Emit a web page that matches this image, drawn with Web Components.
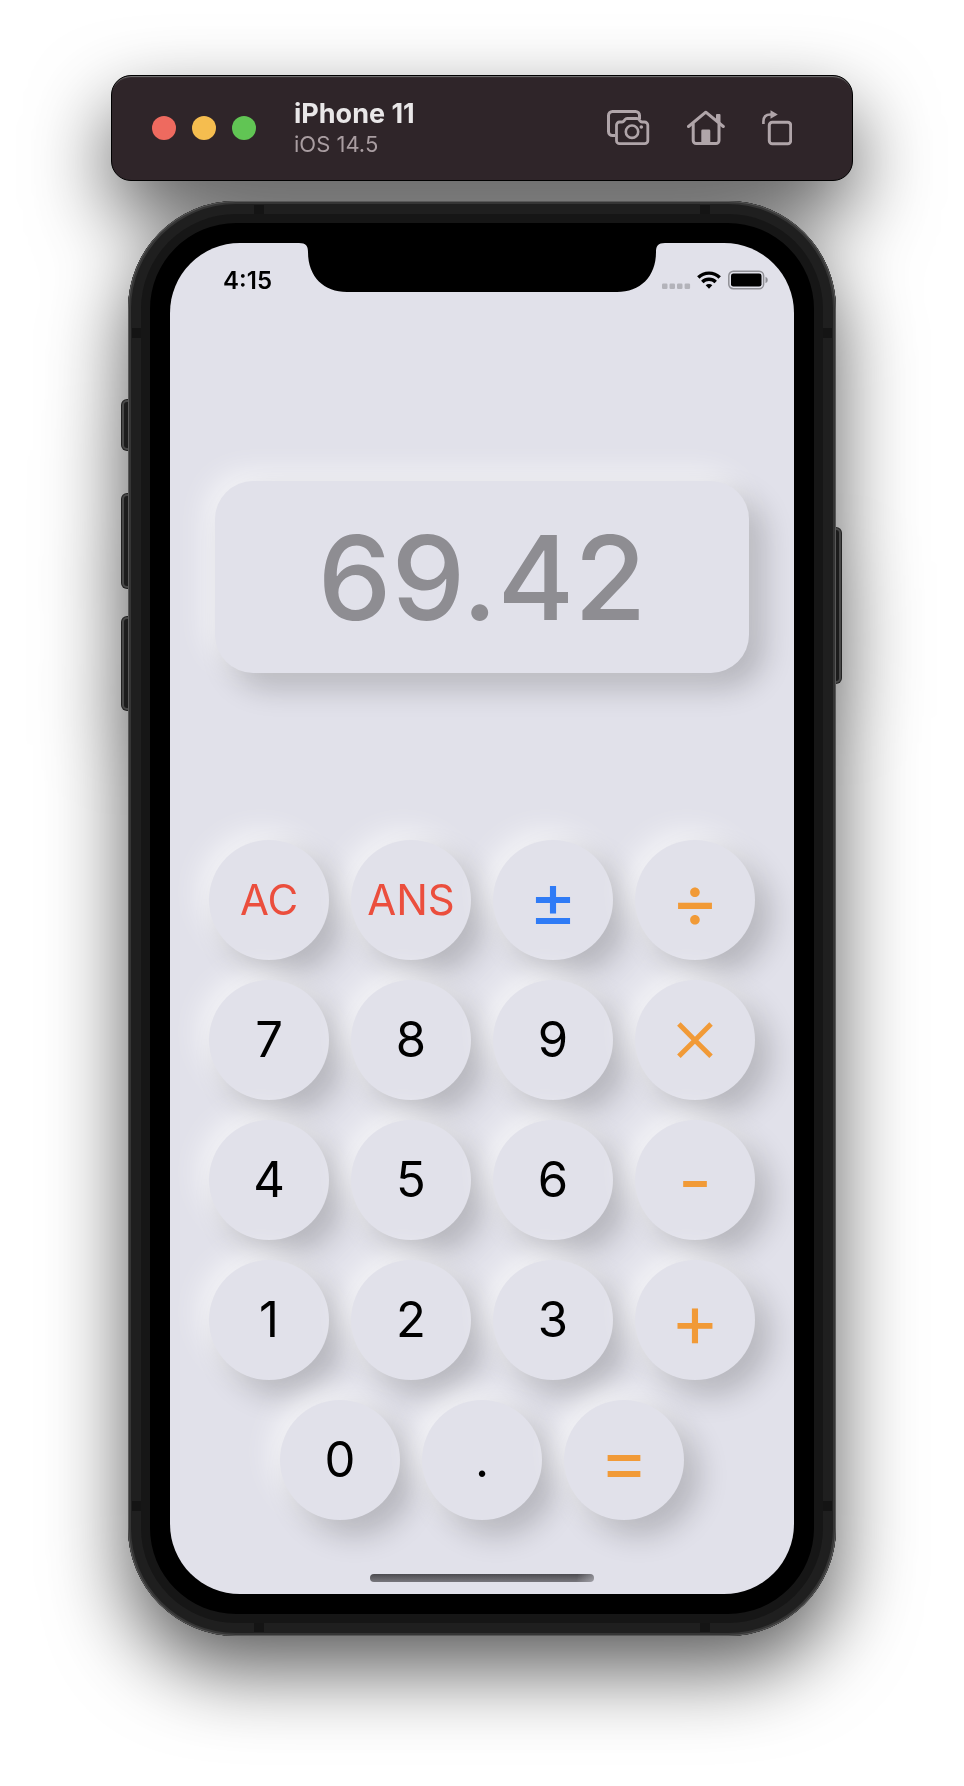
<!DOCTYPE html>
<html lang="en">
<head>
<meta charset="utf-8">
<meta name="viewport" content="width=device-width, initial-scale=1">
<title>iPhone 11 – Calculator</title>
<style>
  body { margin: 0; background: #fff; font-family: Inter, "Liberation Sans", sans-serif; }
</style>
</head>
<body>
<simulator-stage>
  <simulator-toolbar name="iPhone 11" os="iOS 14.5"></simulator-toolbar>
  <phone-frame>
    <status-bar time="4:15"></status-bar>
    <calc-display>69.42</calc-display>
    <calc-pad>
      <calc-row>
        <calc-key kind="clear">AC</calc-key>
        <calc-key kind="clear">ANS</calc-key>
        <calc-key kind="sign" label="plus minus">±</calc-key>
        <calc-key kind="operator" label="divide">÷</calc-key>
      </calc-row>
      <calc-row>
        <calc-key>7</calc-key>
        <calc-key>8</calc-key>
        <calc-key>9</calc-key>
        <calc-key kind="times" label="multiply">×</calc-key>
      </calc-row>
      <calc-row>
        <calc-key>4</calc-key>
        <calc-key>5</calc-key>
        <calc-key>6</calc-key>
        <calc-key kind="operator" label="subtract">-</calc-key>
      </calc-row>
      <calc-row>
        <calc-key>1</calc-key>
        <calc-key>2</calc-key>
        <calc-key>3</calc-key>
        <calc-key kind="operator" label="add">+</calc-key>
      </calc-row>
      <calc-row>
        <calc-key>0</calc-key>
        <calc-key>.</calc-key>
        <calc-key kind="operator" label="equals">=</calc-key>
      </calc-row>
    </calc-pad>
  </phone-frame>
</simulator-stage>

<script>
class Base extends HTMLElement {
  constructor() {
    super();
    this.attachShadow({ mode: "open" }).innerHTML = this.render();
  }
  render() { return "<slot></slot>"; }
}

customElements.define("simulator-stage", class extends Base {
  render() {
    return `<style>
      :host { display: block; overflow: hidden; }
      main { display: flex; flex-direction: column; align-items: center; gap: 20px;
             padding: 75px 16px 149px; filter: drop-shadow(0 34px 40px rgba(0,0,0,.64)); }
    </style><main><slot></slot></main>`;
  }
});

customElements.define("simulator-toolbar", class extends Base {
  render() {
    return `<style>
      :host { display: block; width: 100%; max-width: 742px; }
      header { display: flex; align-items: center; box-sizing: border-box; height: 106px;
               padding: 0 60px 0 40px; border: 1px solid #000; border-radius: 20px;
               background: #2f2529; box-shadow: inset 0 2px 1px -1px #777; }
      .lights { display: flex; gap: 16px; }
      .lights button { width: 24px; height: 24px; padding: 0; border: 0; border-radius: 50%; }
      .close { background: #ee6a5f; } .min { background: #f5bd4f; } .max { background: #61c554; }
      .title { flex: 1; margin-left: 38px; }
      h1 { margin: 0; font-size: 27px; line-height: 32px; font-weight: 700; color: #e9e7e8; }
      p { margin: 0; font-size: 22px; line-height: 28px; color: #a99da1; }
      nav { display: flex; gap: 37px; align-items: center; }
      nav button { display: block; padding: 0; border: 0; background: none; color: #b0a5a9; }
      svg { display: block; fill: none; stroke: currentColor; stroke-width: 3;
            stroke-linejoin: round; stroke-linecap: round; }
      .solid { fill: currentColor; stroke: none; }
    </style>
    <header>
      <div class="lights">
        <button class="close" aria-label="Close"></button>
        <button class="min" aria-label="Minimize"></button>
        <button class="max" aria-label="Zoom"></button>
      </div>
      <div class="title"><h1>${this.getAttribute("name")}</h1><p>${this.getAttribute("os")}</p></div>
      <nav>
        <button aria-label="Screenshot"><svg width="43" height="36" viewBox="0 0 43 36">
          <path d="M8 25.500H5.500a4 4 0 0 1-4-4V5.500a4 4 0 0 1 4-4H28.500a4 4 0 0 1 4 4V9" stroke-linecap="butt"/>
          <path d="M12.500 12H15c1 0 1.500-.4 2.200-1.400l.8-1.100c.6-.8 1.300-1 2.200-1h9.600c.9 0 1.600.2 2.200 1l.8 1.100c.7 1 1.200 1.400 2.200 1.400h2.500a3.300 3.300 0 0 1 3.300 3.300v15.400a3 3 0 0 1-3 3H12.500a3 3 0 0 1-3-3V15a3 3 0 0 1 3-3z" stroke-width="2.800"/>
          <circle cx="25" cy="21.700" r="6.200" stroke-width="2.600"/><circle class="solid" cx="34.300" cy="17" r="1.800"/>
        </svg></button>
        <button aria-label="Home"><svg width="38" height="36" viewBox="0 0 38 36">
          <path d="M1.500 16.500 L18.800 2.200 L36.300 16.500"/>
          <path d="M6.200 14V30.500a3 3 0 0 0 3 3H29a3 3 0 0 0 3-3V14"/>
          <path class="solid" d="M14.300 20.800a1.300 1.300 0 0 1 1.300-1.300h6.400a1.300 1.300 0 0 1 1.300 1.300V34h-9zM29 5a1 1 0 0 1 1-1h2.500a1 1 0 0 1 1 1v9.500L29 10z"/>
        </svg></button>
        <button aria-label="Rotate"><svg width="30" height="38" viewBox="0 0 30 38">
          <rect x="7.300" y="13.300" width="21.400" height="21.400" rx="3"/>
          <path d="M1.400 15V12.500Q1.400 5.500 8.500 5.500H10" stroke-width="2.600" stroke-linecap="butt"/>
          <path class="solid" d="M8.500 1.200 15.800 5.500 8.500 9.800z"/>
        </svg></button>
      </nav>
    </header>`;
  }
});

customElements.define("phone-frame", class extends Base {
  render() {
    return `<style>
      :host { display: block; position: relative; width: 100%; max-width: 708px; }
      .key { position: absolute; z-index: -1; box-sizing: border-box; width: 16px; border: 2px solid #484848;
             border-radius: 5px; background: #1c1c1c; box-shadow: 0 0 0 1px #222; }
      .left { left: -6px; } .right { right: -5px; }
      .mute { top: 199px; height: 50px; } .up { top: 293px; height: 94px; }
      .down { top: 416px; height: 93px; } .power { top: 327px; height: 155px; }
      .body { box-sizing: border-box; padding: 42px; border-radius: 108px; background: #000;
              box-shadow: inset 0 0 0 1px #585858, inset 0 0 0 3px #353535,
                          inset 0 0 0 13px #1f1f1f, inset 0 0 0 22px #161616; }
      .band { position: absolute; background: #141414; }
      .v { width: 9px; height: 10px; } .h { width: 10px; height: 9px; }
      .t { top: 4px; } .b { bottom: 4px; } .l { left: 4px; } .r { right: 4px; }
      .hl { left: 126px; } .hr { right: 126px; } .vt { top: 127px; } .vb { bottom: 125px; }
      .screen { overflow: hidden; border-radius: 70px; background: #e1e1ea; }
      .home { display: block; width: 224px; height: 8px; margin: 54px auto 12px; border-radius: 4px;
              background: linear-gradient(100deg, transparent 92%, rgba(225,225,234,.4)), linear-gradient(#4c4b50, #77767c); }
    </style>
    <span class="key left mute"></span><span class="key left up"></span><span class="key left down"></span>
    <span class="key right power"></span>
    <div class="body"><div class="screen"><slot></slot><span class="home"></span></div></div>
    <span class="band h t hl"></span><span class="band h t hr"></span>
    <span class="band h b hl"></span><span class="band h b hr"></span>
    <span class="band v l vt"></span><span class="band v r vt"></span>
    <span class="band v l vb"></span><span class="band v r vb"></span>`;
  }
});

customElements.define("status-bar", class extends Base {
  render() {
    return `<style>
      :host { display: grid; grid-template-columns: 1fr 348px 1fr; height: 49px; }
      svg { display: block; overflow: visible; }
      time { align-self: end; justify-self: end; margin-right: 36px; font-size: 24px; line-height: 22px; font-weight: 600; color: #000; }
      .icons { display: flex; gap: 7px; align-items: end; justify-content: end; padding: 0 26px 2px 0; }
    </style>
    <time>${this.getAttribute("time")}</time>
    <svg width="348" height="49" viewBox="0 0 348 49"><path d="M-9 0C-2 0 0 3 0 9C0 34 16 49 39 49H309C332 49 348 34 348 9C348 3 350 0 357 0z"/></svg>
    <div class="icons">
      <svg width="28" height="20" viewBox="0 0 28 20" fill="#b3b3ba"><rect y="13.500" width="5.500" height="5.500" rx="1.200"/><rect x="7.500" y="13.500" width="5.500" height="5.500" rx="1.200"/><rect x="15" y="13.500" width="5.500" height="5.500" rx="1.200"/><rect x="22.600" y="13.500" width="5.500" height="5.500" rx="1.200"/></svg>
      <svg width="24" height="20" viewBox="0 0 24 20" fill="none" stroke="#000" stroke-width="3.400"><path d="M1.300 7.500a15.200 15.200 0 0 1 21.400 0M5.300 12a9.500 9.500 0 0 1 13.400 0"/><path d="M8.700 15.300a4.700 4.700 0 0 1 6.600 0L12 18.800z" fill="#000" stroke="none"/></svg>
      <svg width="40" height="20" viewBox="0 0 40 20"><rect x=".8" y="1.300" width="34.800" height="17.400" rx="4.500" fill="none" stroke="#8f8f95" stroke-width="1.500"/><rect x="3" y="3.500" width="30.500" height="13" rx="2.300"/><path d="M37.500 6.800q2.300 1 2.300 3.200t-2.300 3.200z" fill="#8f8f95"/></svg>
    </div>`;
  }
});

customElements.define("calc-display", class extends Base {
  render() {
    return `<style>
      :host { display: block; margin: 189px 45px 167px; border-radius: 38px; background: #e1e1ea;
              box-shadow: 15px 15px 30px rgba(0,0,0,.2), -8px -8px 30px rgba(255,255,255,.7); }
      output { display: block; text-align: center; font-size: 117px; line-height: 194px; height: 192px; font-weight: 500; color: #8e8d92; }
    </style><output><slot></slot></output>`;
  }
});

customElements.define("calc-pad", class extends Base {
  render() {
    return `<style>:host { display: flex; flex-direction: column; gap: 20px; }</style><slot></slot>`;
  }
});

customElements.define("calc-row", class extends Base {
  render() {
    return `<style>:host { display: flex; justify-content: center; gap: 22px; }</style><slot></slot>`;
  }
});

customElements.define("calc-key", class extends Base {
  render() {
    const label = this.getAttribute("label");
    return `<style>
      :host { display: block; }
      button { display: block; box-sizing: border-box; width: 120px; height: 120px; padding: 0; border: 0; border-radius: 50%;
               background: #e1e1ea; color: #000; font: 400 49px/120px Inter, "Liberation Sans", sans-serif; cursor: pointer;
               box-shadow: 15px 15px 30px rgba(0,0,0,.2), -8px -8px 30px rgba(255,255,255,.7); }
      :host([kind=clear]) button { font-size: 42px; color: #eb4e3d; }
      :host([kind=sign]) button { font-size: 74px; color: #2f7bf6; }
      :host([kind=operator]) button { font-size: 74px; color: #f19a37; }
      :host([kind=times]) button { padding-bottom: 12px; font-size: 80px; line-height: 108px; font-weight: 300; color: #f19a37; }
    </style><button type="button"${label ? ` aria-label="${label}"` : ""}><slot></slot></button>`;
  }
});
</script>
</body>
</html>
